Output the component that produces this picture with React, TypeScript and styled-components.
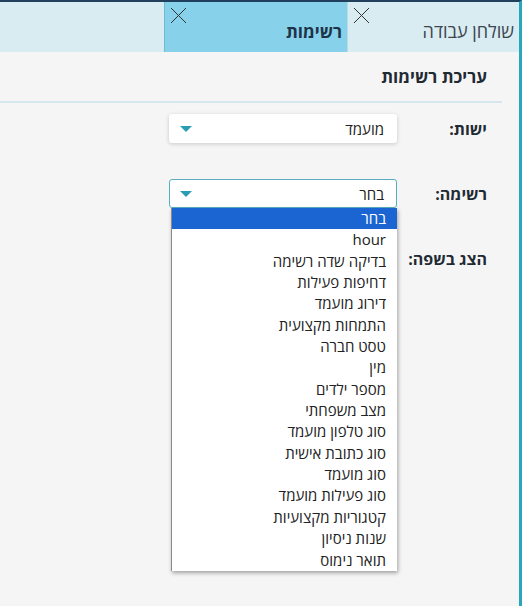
import styled, { createGlobalStyle } from "styled-components";

const GlobalStyle = createGlobalStyle`
  html, body {
    margin: 0;
    padding: 0;
    background: #f5f5f5;
  }
  body {
    font-family: "Open Sans", "Liberation Sans", "DejaVu Sans", sans-serif;
    color: #222;
  }
`;

const Page = styled.div`
  position: relative;
  width: 519px;
  height: 604px;
  direction: rtl;
  border-top: 2px solid #20405e;
  border-right: 3px solid #2aa6bb;
  background: #f5f5f5;
  overflow: hidden;
`;

const TabBar = styled.div`
  display: flex;
  height: 50px;
  background: #d9ecf2;
`;

const Tab = styled.div<{ active?: boolean; w: number }>`
  position: relative;
  width: ${(p) => p.w}px;
  display: flex;
  align-items: flex-end;
  padding: 0 5px 9px 0;
  box-sizing: border-box;
  background: ${(p) => (p.active ? "#88d1eb" : "transparent")};
  border-left: 1px solid ${(p) => (p.active ? "#6fb9d1" : "#b9dbe6")};
  font-size: ${(p) => (p.active ? 17 : 18)}px;
  font-weight: ${(p) => (p.active ? 700 : 400)};
  color: ${(p) => (p.active ? "#1d3347" : "#3b4650")};
`;

const CloseBtn = styled.span`
  position: absolute;
  top: 5px;
  left: 5px;
  width: 17px;
  height: 17px;
  display: flex;
`;

const Content = styled.div`
  position: relative;
`;

const Header = styled.div`
  height: 49px;
  margin-right: 17px;
  border-bottom: 2px solid #d6e8ee;
  display: flex;
  align-items: center;
  padding-right: 15px;
  font-size: 17px;
  font-weight: 700;
  color: #1f2a33;
`;

const Form = styled.div`
  display: flex;
  flex-direction: column;
  gap: 36px;
  padding: 11px 32px 0 0;
`;

const Row = styled.div`
  display: flex;
  align-items: center;
  height: 29px;
`;

const Label = styled.div`
  width: 90px;
  font-size: 16px;
  font-weight: 700;
  color: #1f2a33;
`;

const Select = styled.div<{ focused?: boolean }>`
  width: 228px;
  height: 29px;
  box-sizing: border-box;
  background: #fff;
  border-radius: 3px;
  border: 1px solid ${(p) => (p.focused ? "#5aaebf" : "transparent")};
  box-shadow: ${(p) => (p.focused ? "none" : "0 1px 4px rgba(0,0,0,0.18)")};
  display: flex;
  align-items: center;
  justify-content: space-between;
  padding: 0 12px 0 10px;
  font-size: 15px;
  color: #222;
`;

const Arrow = styled.span`
  width: 0;
  height: 0;
  border-left: 6px solid transparent;
  border-right: 6px solid transparent;
  border-top: 6px solid #2a9cb4;
`;

const Dropdown = styled.ul`
  position: absolute;
  top: 156px;
  right: 122px;
  width: 225px;
  margin: 0;
  padding: 0;
  list-style: none;
  background: #fff;
  border-left: 1px solid #8a8a8a;
  box-shadow: 1px 2px 4px rgba(0, 0, 0, 0.35);
`;

const Option = styled.li<{ selected?: boolean }>`
  height: 21.35px;
  line-height: 21px;
  padding-right: 11px;
  font-size: 15px;
  color: ${(p) => (p.selected ? "#fff" : "#222")};
  background: ${(p) => (p.selected ? "#1b65d3" : "transparent")};
`;

const XIcon = () => (
  <svg width="17" height="17" viewBox="0 0 17 17">
    <path d="M1 1 L16 16 M16 1 L1 16" stroke="#333" strokeWidth="1" fill="none" />
  </svg>
);

const options = [
  "בחר",
  "hour",
  "בדיקה שדה רשימה",
  "דחיפות פעילות",
  "דירוג מועמד",
  "התמחות מקצועית",
  "טסט חברה",
  "מין",
  "מספר ילדים",
  "מצב משפחתי",
  "סוג טלפון מועמד",
  "סוג כתובת אישית",
  "סוג מועמד",
  "סוג פעילות מועמד",
  "קטגוריות מקצועיות",
  "שנות ניסיון",
  "תואר נימוס",
];

export default function App() {
  return (
    <>
      <GlobalStyle />
      <Page>
        <TabBar>
          <Tab w={172}>
            שולחן עבודה
            <CloseBtn>
              <XIcon />
            </CloseBtn>
          </Tab>
          <Tab w={183} active>
            רשימות
            <CloseBtn>
              <XIcon />
            </CloseBtn>
          </Tab>
        </TabBar>
        <Content>
          <Header>עריכת רשימות</Header>
          <Form>
            <Row>
              <Label>ישות:</Label>
              <Select>
                מועמד
                <Arrow />
              </Select>
            </Row>
            <Row>
              <Label>רשימה:</Label>
              <Select focused>
                בחר
                <Arrow />
              </Select>
            </Row>
            <Row>
              <Label>הצג בשפה:</Label>
            </Row>
          </Form>
          <Dropdown>
            {options.map((o, i) => (
              <Option key={o} selected={i === 0}>
                {o}
              </Option>
            ))}
          </Dropdown>
        </Content>
      </Page>
    </>
  );
}
